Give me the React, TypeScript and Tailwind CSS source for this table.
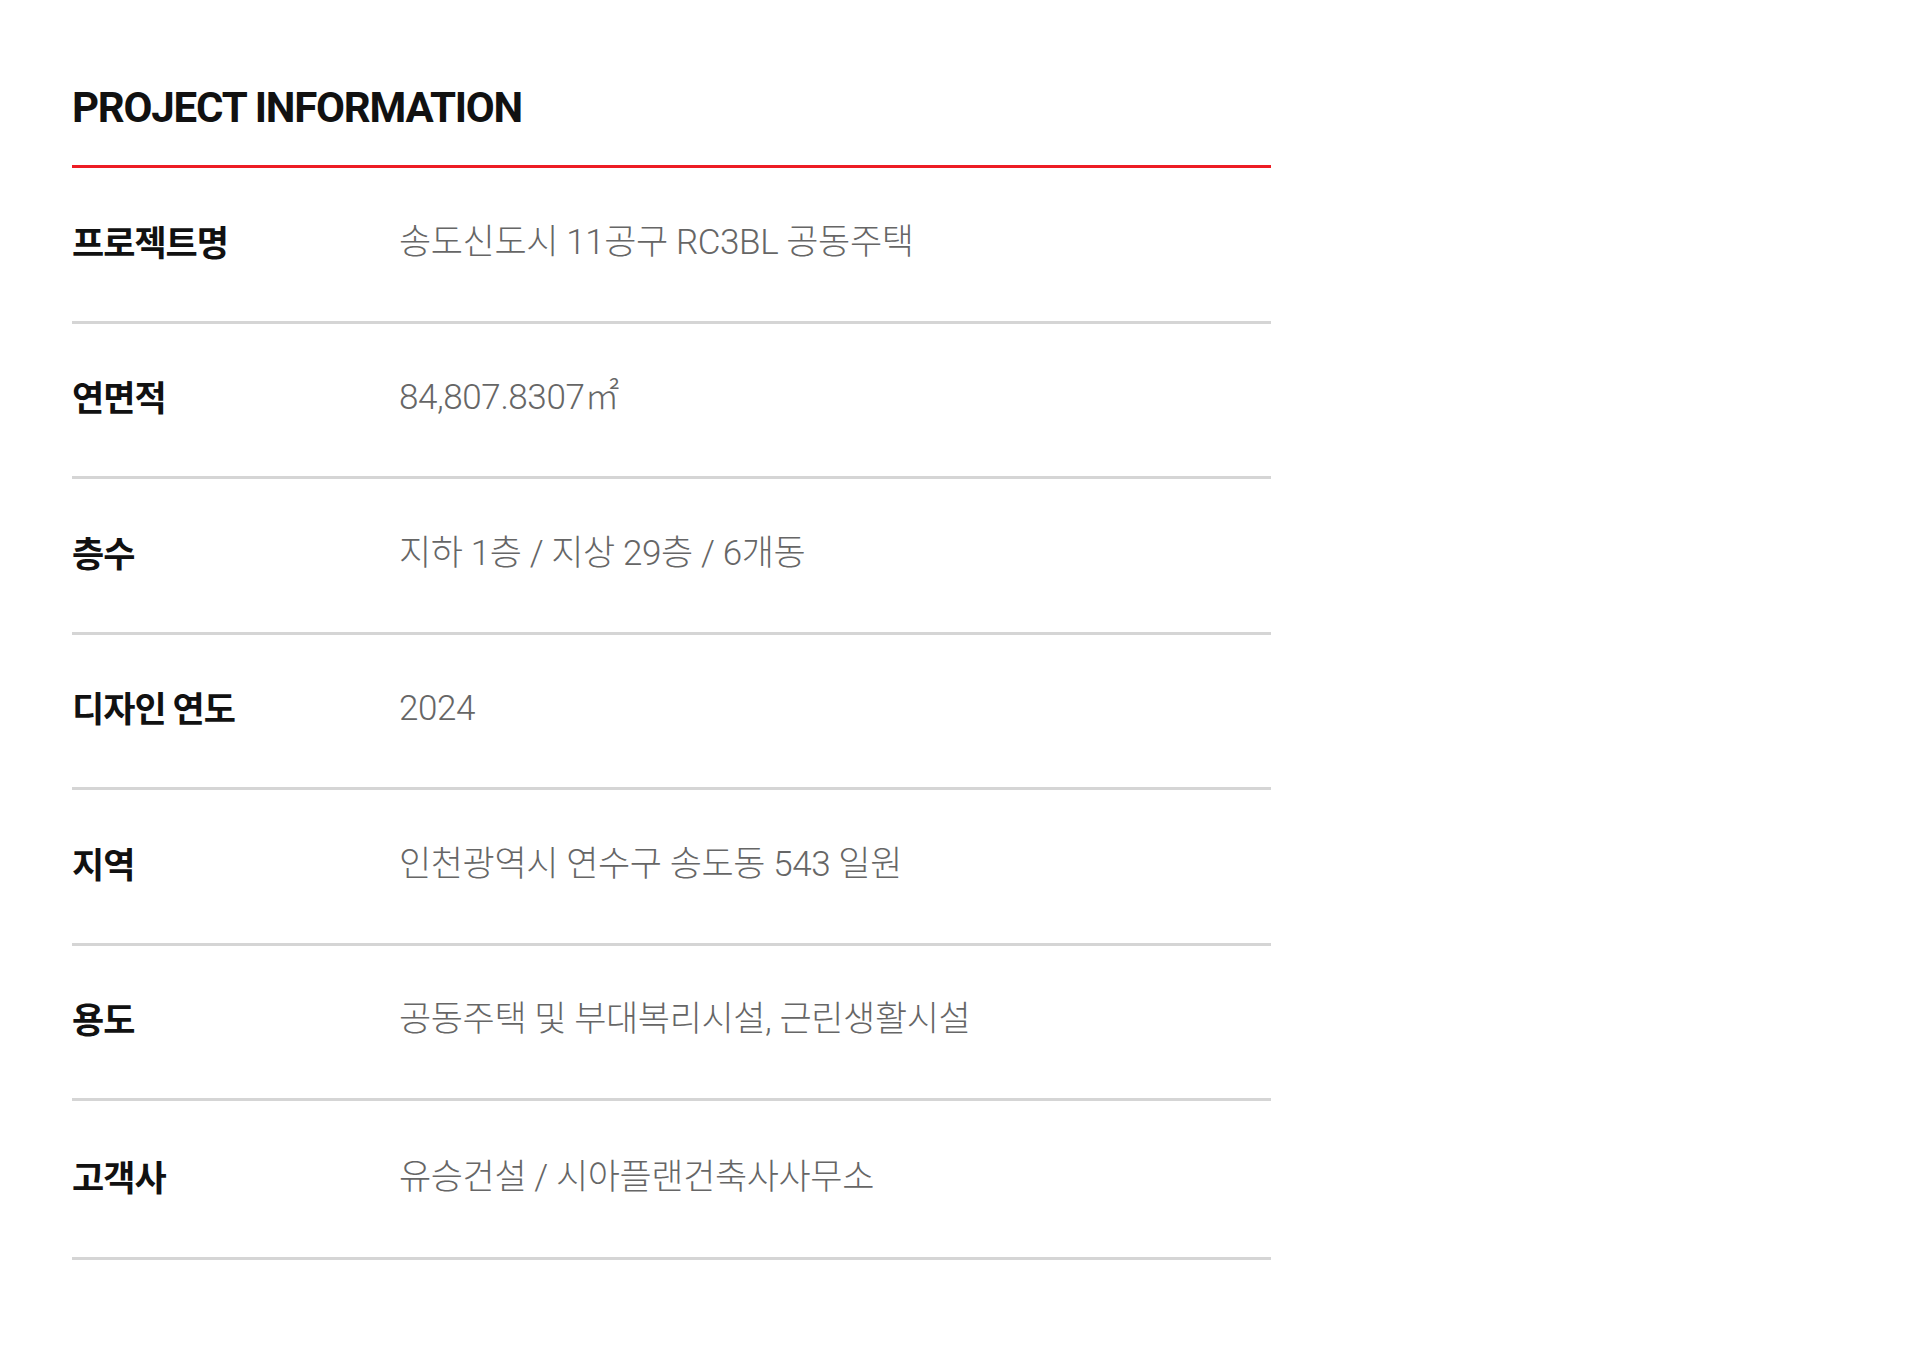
import React from 'react';

const rows: [string, string][] = [
  ['프로젝트명', '송도신도시 11공구 RC3BL 공동주택'],
  ['연면적', '84,807.8307㎡'],
  ['층수', '지하 1층 / 지상 29층 / 6개동'],
  ['디자인 연도', '2024'],
  ['지역', '인천광역시 연수구 송도동 543 일원'],
  ['용도', '공동주택 및 부대복리시설, 근린생활시설'],
  ['고객사', '유승건설 / 시아플랜건축사사무소'],
];

export default function App() {
  return (
    <div className="min-h-[1357px] w-full bg-white">
      <div className="ml-[72px] w-[1199px] pt-[87px]">
        {/* Title */}
        <h1 className="font-['Roboto','Noto_Sans_CJK_KR',sans-serif] text-[42px] leading-[42px] font-bold tracking-[-1.2px] text-[#111]">
          PROJECT INFORMATION
        </h1>
        <div className="mt-[36px] h-[3px] bg-[#ed1c24]" />

        {/* Info rows */}
        <div className="flex flex-col">
          {rows.map(([label, value], i) => (
            <div
              key={label}
              className={`flex items-center border-b-[3px] border-[#d5d5d5] ${
                i === rows.length - 1 ? 'h-[158.5px] pb-[2px]' : 'h-[155.5px] pb-[4px]'
              }`}
            >
              <div className="mb-[4px] w-[327px] shrink-0 font-['Noto_Sans_CJK_KR',sans-serif] text-[35px] leading-none font-bold tracking-[-1px] text-[#111]">
                {label}
              </div>
              <div className="font-['Roboto','Noto_Sans_CJK_KR',sans-serif] text-[35px] leading-none font-light tracking-[-0.4px] text-[#666]">
                {value}
              </div>
            </div>
          ))}
        </div>
      </div>
    </div>
  );
}
